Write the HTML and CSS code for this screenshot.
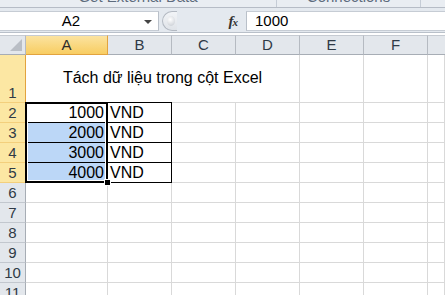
FILE: index.html
```html
<!DOCTYPE html>
<html lang="vi">
<head>
  <meta charset="UTF-8">
  <title>Excel</title>
  <link rel="stylesheet" href="styles.css">
</head>
<body>
  <!-- Ribbon group labels (cut off) -->
  <div class="ribbon">
    <div class="group g1"><span>Get External Data</span></div>
    <div class="group g2"><span>Connections</span></div>
    <div class="group g3"></div>
  </div>

  <!-- Formula bar -->
  <div class="fbar">
    <div class="namebox">
      <span class="ref">A2</span>
      <span class="arrow"></span>
    </div>
    <div class="knob"><span class="dot"></span></div>
    <div class="fx">f<sub>x</sub></div>
    <div class="input">1000</div>
  </div>
  <div class="strip"></div>

  <!-- Sheet -->
  <div class="sheet">
    <div class="corner"><span class="tri"></span></div>
    <div class="ch sel">A</div>
    <div class="ch">B</div>
    <div class="ch">C</div>
    <div class="ch">D</div>
    <div class="ch">E</div>
    <div class="ch">F</div>
    <div class="ch last"></div>

    <div class="rh sel tall">1</div>
    <div class="c title">Tách dữ liệu trong cột Excel</div>
    <div class="c"></div>
    <div class="c"></div>
    <div class="c"></div>

    <div class="rh sel">2</div>
    <div class="c tb num top">1000</div>
    <div class="c tb top">VND</div>
    <div class="c"></div><div class="c"></div><div class="c"></div><div class="c"></div><div class="c"></div>

    <div class="rh sel">3</div>
    <div class="c tb num hl">2000</div>
    <div class="c tb">VND</div>
    <div class="c"></div><div class="c"></div><div class="c"></div><div class="c"></div><div class="c"></div>

    <div class="rh sel">4</div>
    <div class="c tb num hl">3000</div>
    <div class="c tb">VND</div>
    <div class="c"></div><div class="c"></div><div class="c"></div><div class="c"></div><div class="c"></div>

    <div class="rh sel">5</div>
    <div class="c tb num hl">4000</div>
    <div class="c tb">VND</div>
    <div class="c"></div><div class="c"></div><div class="c"></div><div class="c"></div><div class="c"></div>

    <div class="rh">6</div>
    <div class="c"></div><div class="c"></div><div class="c"></div><div class="c"></div><div class="c"></div><div class="c"></div><div class="c"></div>
    <div class="rh">7</div>
    <div class="c"></div><div class="c"></div><div class="c"></div><div class="c"></div><div class="c"></div><div class="c"></div><div class="c"></div>
    <div class="rh">8</div>
    <div class="c"></div><div class="c"></div><div class="c"></div><div class="c"></div><div class="c"></div><div class="c"></div><div class="c"></div>
    <div class="rh">9</div>
    <div class="c"></div><div class="c"></div><div class="c"></div><div class="c"></div><div class="c"></div><div class="c"></div><div class="c"></div>
    <div class="rh">10</div>
    <div class="c"></div><div class="c"></div><div class="c"></div><div class="c"></div><div class="c"></div><div class="c"></div><div class="c"></div>
    <div class="rh">11</div>
    <div class="c"></div><div class="c"></div><div class="c"></div><div class="c"></div><div class="c"></div><div class="c"></div><div class="c"></div>

    <!-- Selection A2:A5 -->
    <div class="selection"><span class="handle"></span></div>
  </div>
</body>
</html>
```

FILE: styles.css
```css
body {
  margin: 0;
  width: 445px;
  height: 295px;
  overflow: hidden;
  font-family: "Liberation Sans", Arial, sans-serif;
  background: #fff;
}

/* Ribbon */
.ribbon {
  display: flex;
  height: 7px;
  background: #e9edf2;
  border-bottom: 1px solid #b6bcc6;
  overflow: hidden;
}

.group {
  border-right: 1px solid #c5ccd6;
  text-align: center;
  font-size: 15px;
  color: #5d6b7d;
  line-height: 1;
}

.group span {
  display: block;
  margin-top: -11px;
}

.g1 { width: 276px; }
.g2 { width: 143px; }
.g3 { flex: 1; border-right: none; }

/* Formula bar */
.fbar {
  display: flex;
  align-items: stretch;
  height: 20px;
  padding: 3px 0 1px;
  background: #e4e9ef;
  border-bottom: 1px solid #b9c0c9;
}

.namebox {
  position: relative;
  width: 158px;
  background: #fff;
  border-right: 1px solid #b9c0c9;
  border-top: 1px solid #c6ccd4;
  border-bottom: 1px solid #c6ccd4;
  font-size: 15px;
  line-height: 18px;
}

.ref {
  display: block;
  text-align: center;
  padding-right: 16px;
  color: #000;
}

.arrow {
  position: absolute;
  right: 6px;
  top: 8px;
  border-left: 4px solid transparent;
  border-right: 4px solid transparent;
  border-top: 4px solid #444;
}

.knob {
  width: 14px;
  margin-left: 3px;
  border-radius: 10px 0 0 10px;
  border: 1px solid #b3b9c2;
  border-right: none;
  background: linear-gradient(#f2f4f7, #dfe3e8);
  position: relative;
}

.dot {
  position: absolute;
  left: 4px;
  top: 4px;
  width: 8px;
  height: 10px;
  border-radius: 50%;
  background: radial-gradient(circle at 40% 35%, #fff, #c3c8cf);
}

.fx {
  box-sizing: border-box;
  width: 69px;
  text-align: right;
  padding-right: 8px;
  font-family: "Liberation Serif", serif;
  font-style: italic;
  font-weight: bold;
  font-size: 15px;
  line-height: 20px;
  color: #333;
}

.fx sub {
  font-size: 11px;
  vertical-align: 0;
  margin-left: -1px;
}

.input {
  flex: 1;
  background: #fff;
  border-left: 1px solid #b9c0c9;
  border-top: 1px solid #c6ccd4;
  border-bottom: 1px solid #c6ccd4;
  padding-left: 8px;
  font-size: 15px;
  line-height: 18px;
  color: #000;
}

.strip {
  height: 2px;
  background: #fff;
}

/* Sheet grid */
.sheet {
  position: relative;
  display: grid;
  grid-template-columns: 26px 82px 64px 64px 64px 64px 64px 1fr;
  grid-template-rows: 20px 48px repeat(10, 20px) 12px;
}

.ch, .corner {
  box-sizing: border-box;
  background: #e3e7ec;
  border-right: 1px solid #b5bac1;
  border-bottom: 1px solid #a7adb5;
  border-top: 1px solid #c6cbd2;
  text-align: center;
  font-size: 15px;
  line-height: 18px;
  color: #2f3a46;
}

.ch.last { border-right: none; }

.corner {
  position: relative;
}

.tri {
  position: absolute;
  right: 3px;
  bottom: 3px;
  border-left: 12px solid transparent;
  border-bottom: 12px solid #b9bec5;
}

.ch.sel {
  background: linear-gradient(#fbe3a0, #f8cd62);
  border-right-color: #e2a33f;
  border-bottom-color: #e2a33f;
  border-left: 1px solid #e2a33f;
  margin-left: -1px;
  color: #2c2c2c;
}

.rh {
  box-sizing: border-box;
  background: #e3e7ec;
  border-right: 1px solid #a7adb5;
  border-bottom: 1px solid #c2c7ce;
  text-align: center;
  font-size: 15px;
  line-height: 19px;
  color: #2f3a46;
  overflow: hidden;
}

.rh.sel {
  background: #fce7a3;
  border-right-color: #e2a33f;
  border-bottom-color: #f3cf7c;
}

.rh.tall {
  display: flex;
  align-items: flex-end;
  justify-content: center;
}

.c {
  box-sizing: border-box;
  border-right: 1px solid #d9d9d9;
  border-bottom: 1px solid #d9d9d9;
  font-size: 16px;
  line-height: 19px;
  color: #000;
  padding: 0 2px;
  white-space: nowrap;
}

.title {
  grid-column: 2 / span 4;
  display: flex;
  align-items: center;
  justify-content: center;
  padding-bottom: 2px;
}

.tb {
  border-right-color: #000;
  border-bottom-color: #000;
}

.tb.top {
  box-shadow: 0 -1px 0 #000;
}

.num {
  text-align: right;
  padding-right: 3px;
}

.hl {
  background: #bcd7f7;
}

/* Active selection outline */
.selection {
  position: absolute;
  left: 25px;
  top: 67px;
  width: 79px;
  height: 77px;
  border: 2px solid #000;
  box-shadow: inset 0 0 0 1px #fff;
  pointer-events: none;
}

.handle {
  position: absolute;
  right: -5px;
  bottom: -5px;
  width: 5px;
  height: 5px;
  background: #000;
  border: 1px solid #fff;
}
```
